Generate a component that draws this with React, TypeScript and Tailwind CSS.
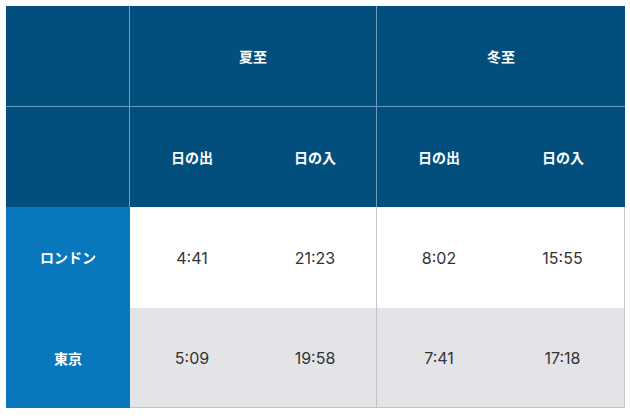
import React from 'react';

const font = { fontFamily: '"Noto Sans CJK JP", "Noto Sans", sans-serif' };
const numFont = { fontFamily: 'Inter, "Noto Sans CJK JP", sans-serif' };

const rows = [
  { city: 'ロンドン', vals: ['4:41', '21:23', '8:02', '15:55'], bg: 'bg-white' },
  { city: '東京', vals: ['5:09', '19:58', '7:41', '17:18'], bg: 'bg-[#e4e4e8]' },
];

const App = () => {
  return (
    <div className="w-[630px] h-[416px] bg-white p-[6px]" style={font}>
      <div className="grid grid-cols-[124px_124px_123px_124px_124px] grid-rows-[100px_101px_101px_100px] w-[619px]">
        {/* header row 1 */}
        <div className="bg-[#024f7e] border-r border-[#6c9bc0]" />
        <div className="col-span-2 bg-[#024f7e] border-r border-[#6c9bc0] flex items-center justify-center text-white font-bold text-[14px]">
          夏至
        </div>
        <div className="col-span-2 bg-[#024f7e] flex items-center justify-center text-white font-bold text-[14px]">
          冬至
        </div>

        {/* header row 2 */}
        <div className="bg-[#024f7e] border-t border-r border-[#6c9bc0]" />
        <div className="bg-[#024f7e] border-t border-[#6c9bc0] flex items-center justify-center text-white font-bold text-[14px]">日の出</div>
        <div className="bg-[#024f7e] border-t border-r border-[#6c9bc0] flex items-center justify-center text-white font-bold text-[14px]">日の入</div>
        <div className="bg-[#024f7e] border-t border-[#6c9bc0] flex items-center justify-center text-white font-bold text-[14px]">日の出</div>
        <div className="bg-[#024f7e] border-t border-[#6c9bc0] flex items-center justify-center text-white font-bold text-[14px]">日の入</div>

        {rows.map((r, i) => (
          <React.Fragment key={r.city}>
            <div className={`bg-[#0877bc] flex items-center justify-center text-white font-bold text-[14px] ${i === 1 ? 'border-t border-[#0877bc]' : ''}`}>
              {r.city}
            </div>
            {r.vals.map((v, j) => (
              <div
                key={j}
                style={numFont}
                className={`${r.bg} flex items-center justify-center text-[#333] text-[16px] border-[#c4c4c8] ${j === 1 ? 'border-r' : ''} ${j === 3 ? 'border-r' : ''} ${i === 1 ? 'border-b' : ''}`}
              >
                {v}
              </div>
            ))}
          </React.Fragment>
        ))}
      </div>
    </div>
  );
};

export default App;
